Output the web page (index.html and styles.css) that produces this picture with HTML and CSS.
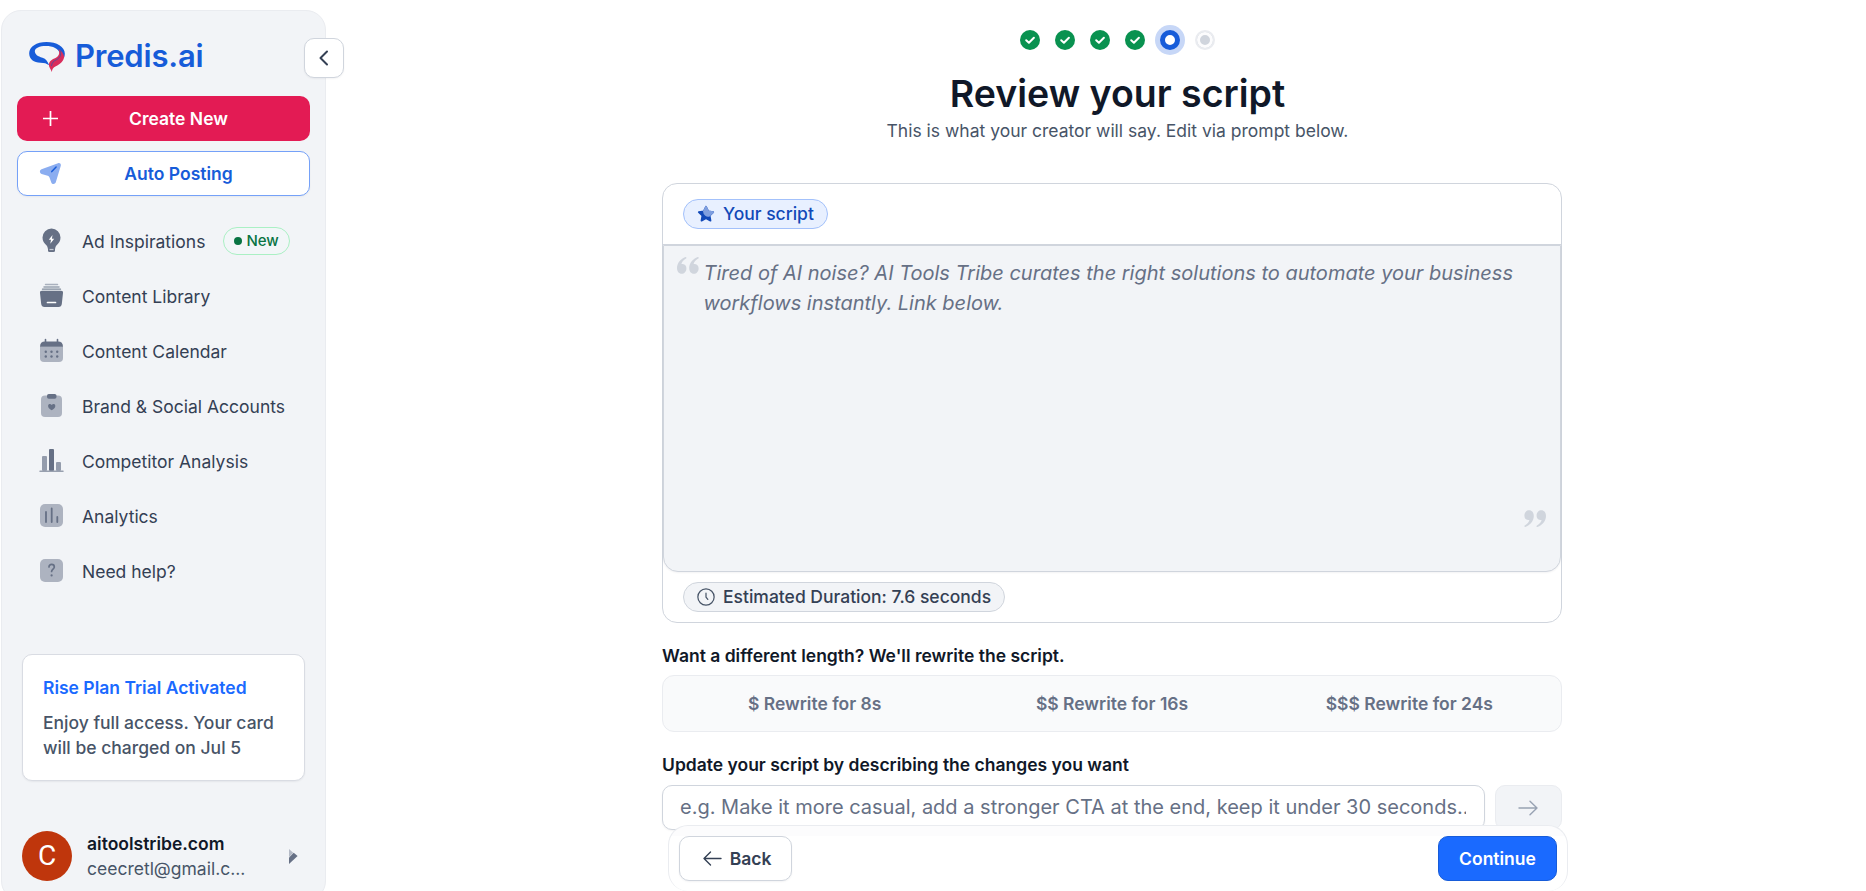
FILE: index.html
```html
<!DOCTYPE html>
<html lang="en">
<head>
    <meta charset="UTF-8">
    <meta name="viewport" content="width=device-width, initial-scale=1.0">
    <title>Predis.ai - Review your script</title>
    <link rel="stylesheet" href="styles.css">
</head>
<body>
    <div class="layout">
        <!-- Sidebar -->
        <aside class="sidebar">
            <button class="collapse-btn" aria-label="Collapse sidebar">
                <svg width="10" height="16" viewBox="0 0 10 16" fill="none" stroke="#344054" stroke-width="2" stroke-linecap="round" stroke-linejoin="round"><path d="M8 1.5 1.5 8 8 14.5"/></svg>
            </button>

            <div class="logo">
                <svg width="36" height="30" viewBox="0 0 107 90">
                    <path fill="#175cd9" d="M52 0C22 0 0 14 0 34c0 18 14 28 34 28 12 0 18 2 26 8-4-12-10-20-20-23-14-3-23-10-23-19 0-10 14-16 33-16 22 0 38 8 42 22l12 14c2-4 3-8 3-13C107 14 82 0 52 0Z"/>
                    <path fill="#d92d5c" d="M88 21c5 13 1 22-9 27-10 4-19 9-20 20 0 8 6 12 9 22 1-8 4-13 12-17 13-7 23-15 25-29-2-10-8-18-17-23Z"/>
                    <path fill="none" stroke="#5b4a9c" stroke-width="3" d="M93 26c4 14-1 22-11 27-9 4-14 9-15 19"/>
                </svg>
                <span class="logo-text">Predis.ai</span>
            </div>

            <button class="side-btn create-btn">
                <svg width="25" height="25" viewBox="0 0 25 25" fill="none" stroke="#fff" stroke-width="1.7"><path d="M5 12.5h15M12.5 5v15"/></svg>
                <span>Create New</span>
            </button>
            <button class="side-btn posting-btn">
                <svg width="25" height="25" viewBox="0 0 25 25">
                    <path fill="#8badf0" d="M2.500 8.300 19 2.200c1.800-.6 3.300.7 2.800 2.600l-5 16.400c-.7 2.200-3.700 2.300-4.500.2l-1.700-4.600c-.4-1-.9-1.600-1.900-2L2.600 12.900c-2.200-.8-2.200-3.800-.1-4.600Z"/>
                    <path stroke="#175cd9" stroke-width="1.500" stroke-linecap="round" d="m12.800 10.600 4.300-4.500"/>
                </svg>
                <span>Auto Posting</span>
            </button>

            <nav class="nav">
                <a href="#" class="nav-item">
                    <svg width="25" height="25" viewBox="0 0 25 25">
                        <path fill="#667085" d="M12.500.5a9 9 0 0 0-9 9c0 3.600 1.800 5.700 3.600 7.500 1.200 1.200 1.600 2 1.600 3.500h7.600c0-1.500.4-2.300 1.600-3.500 1.800-1.800 3.600-3.900 3.600-7.500a9 9 0 0 0-9-9Z"/>
                        <path fill="#fff" d="m13.500 7-3.700 4.800h2.200l-.7 4 3.900-5h-2.300Z"/>
                        <path fill="#667085" d="M9 20h7v2.500a1.500 1.500 0 0 1-1.500 1.500h-4A1.500 1.500 0 0 1 9 22.500Z"/>
                        <path stroke="#c5cad4" stroke-width="1.200" d="M10.500 21.500h4"/>
                    </svg>
                    <span>Ad Inspirations</span>
                    <span class="new-badge"><i class="dot"></i>New</span>
                </a>
                <a href="#" class="nav-item">
                    <svg width="25" height="25" viewBox="0 0 25 25">
                        <path stroke="#a9b0bd" stroke-width="1.500" stroke-linecap="round" d="M6.500 1.500h12"/>
                        <path stroke="#98a1b0" stroke-width="1.500" stroke-linecap="round" d="M5 4h15"/>
                        <path stroke="#7f899a" stroke-width="1.300" stroke-linecap="round" d="M3.500 6.200h18"/>
                        <path fill="#667085" d="M3 7.800h19c1.500 0 2.200.9 2 2.200l-1.200 11c-.3 2-1.300 3-3.300 3h-14c-2 0-3-1-3.300-3L1 10c-.2-1.300.5-2.200 2-2.200Z"/>
                        <path stroke="#fff" stroke-width="1.700" stroke-linecap="round" d="M8.500 19.500h8"/>
                    </svg>
                    <span>Content Library</span>
                </a>
                <a href="#" class="nav-item">
                    <svg width="25" height="25" viewBox="0 0 25 25">
                        <path fill="#adb3c0" d="M1 8.500h23V20a4 4 0 0 1-4 4H5a4 4 0 0 1-4-4Z"/>
                        <path fill="#667085" d="M1 8.800C1 5.400 2.700 3.600 6 3.600h13c3.300 0 5 1.800 5 5.200Z"/>
                        <path stroke="#667085" stroke-width="1.600" stroke-linecap="round" d="M6.500 1.500v4M18.500 1.500v4"/>
                        <g fill="#667085"><circle cx="6.800" cy="13.800" r="1.200"/><circle cx="12.500" cy="13.800" r="1.200"/><circle cx="18.200" cy="13.800" r="1.200"/><circle cx="6.800" cy="18.500" r="1.200"/><circle cx="12.500" cy="18.500" r="1.200"/><circle cx="18.200" cy="18.500" r="1.200"/></g>
                    </svg>
                    <span>Content Calendar</span>
                </a>
                <a href="#" class="nav-item">
                    <svg width="25" height="25" viewBox="0 0 25 25">
                        <rect x="2" y="2.500" width="21" height="21.500" rx="4" fill="#adb3c0"/>
                        <rect x="8" y="1" width="9.500" height="4.800" rx="1.800" fill="#667085"/>
                        <path fill="#667085" d="M12.700 17.300c-2.400-1.500-3.600-2.800-3.600-4.400 0-2 2.400-2.500 3.600-.9 1.200-1.600 3.600-1.100 3.600.9 0 1.600-1.200 2.900-3.600 4.400Z"/>
                    </svg>
                    <span>Brand &amp; Social Accounts</span>
                </a>
                <a href="#" class="nav-item">
                    <svg width="25" height="25" viewBox="0 0 25 25">
                        <rect x="3" y="8" width="5" height="15" rx="1" fill="#949cac"/>
                        <rect x="10" y="1" width="5" height="22" rx="1" fill="#667085"/>
                        <rect x="17" y="14" width="5" height="9" rx="1" fill="#949cac"/>
                        <path stroke="#98a0af" stroke-width="1.500" stroke-linecap="round" d="M1 23.300h23"/>
                    </svg>
                    <span>Competitor Analysis</span>
                </a>
                <a href="#" class="nav-item">
                    <svg width="25" height="25" viewBox="0 0 25 25">
                        <rect x="1" y="1" width="23" height="23" rx="5" fill="#adb3c0"/>
                        <path stroke="#667085" stroke-width="1.800" stroke-linecap="round" d="M7 9v10M12.700 5.500V19M18.300 14v5"/>
                    </svg>
                    <span>Analytics</span>
                </a>
                <a href="#" class="nav-item">
                    <svg width="25" height="25" viewBox="0 0 25 25" fill="none">
                        <rect x="1" y="1" width="23" height="23" rx="5" fill="#adb3c0"/>
                        <path stroke="#667085" stroke-width="1.700" stroke-linecap="round" d="M10 9c0-1.600 1.100-2.600 2.600-2.600s2.700 1 2.700 2.500c0 2-2.700 2.300-2.700 4.600"/>
                        <circle cx="12.600" cy="17.400" r="1.100" fill="#667085"/>
                    </svg>
                    <span>Need help?</span>
                </a>
            </nav>

            <div class="trial-card">
                <h3>Rise Plan Trial Activated</h3>
                <p>Enjoy full access. Your card will be charged on Jul 5</p>
            </div>

            <div class="profile">
                <div class="avatar">C</div>
                <div class="profile-info">
                    <div class="profile-name">aitoolstribe.com</div>
                    <div class="profile-email">ceecretl@gmail.c...</div>
                </div>
                <svg width="9" height="15" viewBox="0 0 9 15"><path fill="#b4bac6" d="M0 0v8l4.200-4.200Z"/><path fill="#667085" d="M0 15V8.500l4.700-4.700L8.600 7Z"/></svg>
            </div>
        </aside>

        <!-- Main content -->
        <main class="main">
            <div class="steps">
                <span class="step done"><svg width="20" height="20" viewBox="0 0 20 20" fill="none" stroke="#fff" stroke-width="2" stroke-linecap="round" stroke-linejoin="round"><path d="m6.200 10.300 2.700 2.500 5-5.100"/></svg></span>
                <span class="step done"><svg width="20" height="20" viewBox="0 0 20 20" fill="none" stroke="#fff" stroke-width="2" stroke-linecap="round" stroke-linejoin="round"><path d="m6.200 10.300 2.700 2.500 5-5.100"/></svg></span>
                <span class="step done"><svg width="20" height="20" viewBox="0 0 20 20" fill="none" stroke="#fff" stroke-width="2" stroke-linecap="round" stroke-linejoin="round"><path d="m6.200 10.300 2.700 2.500 5-5.100"/></svg></span>
                <span class="step done"><svg width="20" height="20" viewBox="0 0 20 20" fill="none" stroke="#fff" stroke-width="2" stroke-linecap="round" stroke-linejoin="round"><path d="m6.200 10.300 2.700 2.500 5-5.100"/></svg></span>
                <span class="step current"></span>
                <span class="step upcoming"></span>
            </div>
            <h1>Review your script</h1>
            <p class="subtitle">This is what your creator will say. Edit via prompt below.</p>

            <div class="content">
                <section class="script-card">
                    <div class="script-header">
                        <span class="pill pill-blue">
                            <svg width="18" height="18" viewBox="0 0 18 18">
                                <path fill="#1149b8" stroke="#1149b8" stroke-width="1.800" stroke-linejoin="round" d="m9 1.800 2.200 4.600 5 .7-3.600 3.500.9 5L9 13.200l-4.500 2.400.9-5L1.800 7.100l5-.7Z"/>
                                <path fill="#7f9fdf" stroke="#7f9fdf" stroke-width="1.800" stroke-linejoin="round" d="m9 1.800 2.200 4.600 5 .7-3.600 3.300C10 11.800 7 9.500 6.900 6.300Z"/>
                            </svg>
                            <span>Your script</span>
                        </span>
                    </div>
                    <div class="script-body">
                        <svg class="quote" width="22" height="17" viewBox="0 0 22 17" fill="#d0d5dd"><path id="q" d="M8.600 0c.9 0 1.300 1.200.4 1.600C6.500 3 4.800 4.900 4.400 7.100c.4-.2.900-.2 1.300-.1a4.600 4.600 0 0 1 3.700 4.800c-.1 2.900-2.100 5-4.700 5C1.800 16.800 0 14.400 0 11 0 6 3.700 1.700 8.600 0Z"/><use href="#q" x="12.200"/></svg>
                        <p class="script-text">Tired of AI noise? AI Tools Tribe curates the right solutions to automate your business workflows instantly. Link below.</p>
                        <svg class="quote quote-end" width="22" height="17" viewBox="0 0 22 17" fill="#d0d5dd"><use href="#q"/><use href="#q" x="12.200"/></svg>
                    </div>
                    <div class="script-footer">
                        <span class="pill">
                            <svg width="18" height="18" viewBox="0 0 19 19" fill="none" stroke="#475467" stroke-width="1.300" stroke-linecap="round" stroke-linejoin="round"><circle cx="9.500" cy="9.500" r="8.600"/><path d="M9.500 5.500v4.200l1.900 2.400"/></svg>
                            <span>Estimated Duration: 7.6 seconds</span>
                        </span>
                    </div>
                </section>

                <h2>Want a different length? We'll rewrite the script.</h2>
                <div class="rewrite-options">
                    <button>$ Rewrite for 8s</button>
                    <button>$$ Rewrite for 16s</button>
                    <button>$$$ Rewrite for 24s</button>
                </div>

                <h2>Update your script by describing the changes you want</h2>
                <div class="prompt-row">
                    <input type="text" placeholder="e.g. Make it more casual, add a stronger CTA at the end, keep it under 30 seconds...">
                    <button class="send-btn" aria-label="Send">
                        <svg width="20" height="16" viewBox="0 0 20 16" fill="none" stroke="#98a2b3" stroke-width="1.400" stroke-linecap="round" stroke-linejoin="round"><path d="M1 8h18M12 1.200 19 8l-7 6.800"/></svg>
                    </button>
                </div>
            </div>
        </main>
    </div>

    <!-- Bottom bar stays over the page content -->
    <div class="action-bar">
        <button class="back-btn">
            <svg width="19" height="15" viewBox="0 0 19 15" fill="none" stroke="#344054" stroke-width="1.400" stroke-linecap="round" stroke-linejoin="round"><path d="M18 7.500H1M7.500 1 1 7.500 7.500 14"/></svg>
            Back
        </button>
        <button class="continue-btn">Continue</button>
    </div>
</body>
</html>
```

FILE: styles.css
```css
* {
    margin: 0;
    padding: 0;
    box-sizing: border-box;
    font-family: Inter, 'Open Sans', sans-serif;
}

body {
    height: 100vh;
    overflow: hidden;
    background-color: #fff;
    color: #101828;
    font-size: 17.5px;
    line-height: 25px;
    position: relative;
}

button {
    border: none;
    background: none;
    cursor: pointer;
    font-size: 17.5px;
    line-height: 25px;
}

svg {
    display: block;
    flex-shrink: 0;
}

.layout {
    display: flex;
}

/* Sidebar */
.sidebar {
    position: relative;
    width: 325px;
    height: 891px;
    margin: 10px 0 0 1px;
    padding: 31px 15px 0;
    background-color: #f2f4f7;
    border: 1px solid #eaecf0;
    border-radius: 20px;
    flex-shrink: 0;
}

.collapse-btn {
    position: absolute;
    top: 27px;
    right: -19px;
    width: 40px;
    height: 40px;
    display: flex;
    align-items: center;
    justify-content: center;
    background-color: #fff;
    border: 1px solid #d0d5dd;
    border-radius: 10px;
    box-shadow: 0 1px 2px rgba(16, 24, 40, 0.05);
}

.logo {
    display: flex;
    align-items: center;
    gap: 10px;
    height: 30px;
    padding-left: 12px;
    margin-bottom: 24px;
}

.logo-text {
    color: #175cd9;
    font-size: 31px;
    font-weight: 600;
    line-height: 30px;
    letter-spacing: -0.2px;
    padding-bottom: 2px;
}

.side-btn {
    width: 293px;
    height: 45px;
    padding: 0 21px;
    display: flex;
    align-items: center;
    gap: 5px;
    border-radius: 10px;
    font-weight: 600;
}

.side-btn span {
    flex: 1;
}

.create-btn {
    background-color: #e31b54;
    color: #fff;
    margin-bottom: 10px;
}

.posting-btn {
    background-color: #fff;
    border: 1px solid #75a1f8;
    color: #175cd9;
    box-shadow: 0 1px 2px rgba(16, 24, 40, 0.05);
}

.nav {
    margin-top: 18px;
}

.nav-item {
    height: 55px;
    padding-left: 22px;
    display: flex;
    align-items: center;
    gap: 18px;
    color: #344054;
    text-decoration: none;
}

.nav-item svg {
    margin-bottom: 2px;
}

.new-badge {
    height: 28px;
    margin-bottom: 2px;
    padding: 0 10px;
    display: flex;
    align-items: center;
    gap: 4px;
    background-color: #f2f6f8;
    border: 1px solid #aaf0c4;
    border-radius: 14px;
    color: #087443;
    font-size: 15px;
    font-weight: 500;
}

.dot {
    width: 8px;
    height: 8px;
    border-radius: 50%;
    background-color: #087443;
}

.trial-card {
    width: 283px;
    height: 127px;
    margin: 55px 0 50px 5px;
    padding: 20px;
    background-color: #fff;
    border: 1px solid #d9dce3;
    border-radius: 10px;
    box-shadow: 0 1px 2px rgba(16, 24, 40, 0.06);
}

.trial-card h3 {
    color: #1a6aff;
    font-size: 17.5px;
    font-weight: 600;
    margin-bottom: 10px;
}

.trial-card p {
    color: #475467;
    font-weight: 500;
}

.profile {
    display: flex;
    align-items: center;
    padding: 0 12px 0 5px;
}

.avatar {
    width: 50px;
    height: 50px;
    margin-right: 15px;
    border-radius: 50%;
    background-color: #bf360c;
    color: #fff;
    font-family: Roboto, sans-serif;
    font-size: 28px;
    line-height: 50px;
    text-align: center;
}

.profile-info {
    flex: 1;
}

.profile-name {
    font-weight: 600;
}

.profile-email {
    color: #475467;
}

/* Main content */
.main {
    flex: 1;
    margin-left: 43px;
    padding-top: 30px;
    display: flex;
    flex-direction: column;
    align-items: center;
}

.steps {
    display: flex;
    gap: 15px;
    height: 20px;
    margin-bottom: 20px;
}

.step {
    width: 20px;
    height: 20px;
    border-radius: 50%;
}

.done {
    background-color: #099250;
}

.current {
    background-color: #fff;
    border: 5px solid #175cd9;
    box-shadow: 0 0 0 5px #c7d7f7;
}

.upcoming {
    background-color: #d0d5dd;
    border: 2px solid #eaecf0;
    box-shadow: inset 0 0 0 3px #fcfcfd;
}

h1 {
    font-size: 37.5px;
    font-weight: 600;
    line-height: 47px;
    margin-bottom: 1px;
}

.subtitle {
    color: #475467;
    margin-bottom: 40px;
}

.content {
    width: 900px;
    margin-right: 11px;
}

.script-card {
    height: 440px;
    border: 1px solid #d0d5dd;
    border-radius: 15px;
    margin-bottom: 20px;
}

.script-header {
    height: 61px;
    padding: 15px 20px;
    border-bottom: 1px solid #d0d5dd;
}

.pill {
    display: inline-flex;
    align-items: center;
    gap: 8px;
    height: 30px;
    padding: 0 13px;
    border: 1px solid #d0d5dd;
    border-radius: 15px;
    background-color: #f2f4f7;
    color: #344054;
    font-weight: 500;
}

.pill span {
    padding-bottom: 1px;
}

.pill-blue {
    background-color: #e8f0ff;
    border-color: #a3c1fb;
    color: #1149b8;
}

.script-body {
    height: 327px;
    padding: 11px 14px 44px 13px;
    display: flex;
    background-color: #f2f4f7;
    border: 1px solid #d0d5dd;
    border-radius: 0 0 15px 15px;
    box-shadow: 0 1px 2px rgba(16, 24, 40, 0.05);
}

.script-text {
    flex: 1;
    padding: 1px 6px 0 4.5px;
    color: #667085;
    font-size: 20px;
    font-style: italic;
    line-height: 30px;
}

.quote-end {
    align-self: flex-end;
    transform: rotate(180deg);
}

.script-footer {
    padding: 10px 20px;
}

h2 {
    font-size: 17.5px;
    font-weight: 600;
    line-height: 25px;
}

.rewrite-options {
    height: 57px;
    margin: 7px 0 20px;
    padding: 0 3px;
    display: flex;
    background-color: #f9fafb;
    border: 1px solid #eaecf0;
    border-radius: 12px;
}

.rewrite-options button {
    flex: 1;
    color: #667085;
    font-weight: 600;
}

.prompt-row {
    display: flex;
    gap: 10px;
    margin-top: 8px;
}

.prompt-row input {
    flex: 1;
    height: 45px;
    padding: 0 18px 2px 17px;
    border: 1px solid #d0d5dd;
    border-radius: 10px;
    font-size: 20px;
    box-shadow: 0 1px 2px rgba(16, 24, 40, 0.05);
}

.prompt-row input::placeholder {
    color: #667085;
}

.send-btn {
    width: 67px;
    height: 45px;
    padding-right: 1px;
    display: flex;
    align-items: center;
    justify-content: center;
    background-color: #f2f4f7;
    border: 1px solid #eaecf0;
    border-radius: 10px;
}

/* Bottom bar */
.action-bar {
    position: absolute;
    left: 668px;
    bottom: 0;
    width: 900px;
    height: 66px;
    padding: 10px;
    display: flex;
    justify-content: space-between;
    background: linear-gradient(#fcfcfd 10px, #fff 10px);
    border: 1px solid #eaecf0;
    border-bottom: none;
    border-radius: 20px;
}

.back-btn {
    height: 45px;
    width: 113px;
    padding-left: 3px;
    display: flex;
    align-items: center;
    justify-content: center;
    gap: 8px;
    background-color: #fff;
    border: 1px solid #d0d5dd;
    border-radius: 10px;
    color: #344054;
    font-weight: 600;
    box-shadow: 0 1px 2px rgba(16, 24, 40, 0.05);
}

.continue-btn {
    height: 45px;
    width: 119px;
    background-color: #1a6aff;
    border: 1px solid #175cd9;
    border-radius: 10px;
    color: #fff;
    font-weight: 600;
}
```
